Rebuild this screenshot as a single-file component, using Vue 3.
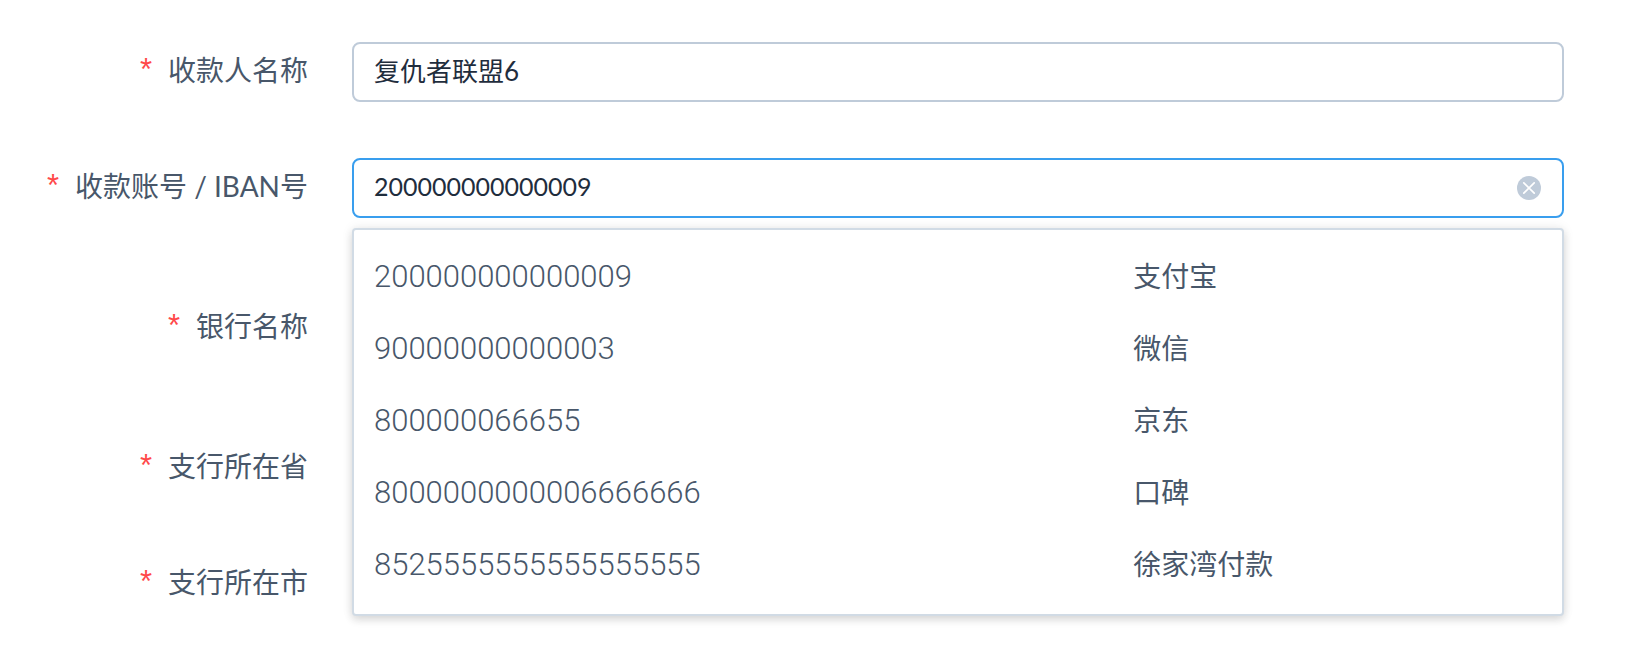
<script setup>
import { ref } from 'vue'

const payee = ref('复仇者联盟6')
const account = ref('200000000000009')
const bank = ref('')
const province = ref('')
const city = ref('')

const suggestions = [
  { account: '200000000000009', channel: '支付宝' },
  { account: '90000000000003', channel: '微信' },
  { account: '800000066655', channel: '京东' },
  { account: '8000000000006666666', channel: '口碑' },
  { account: '8525555555555555555', channel: '徐家湾付款' },
]
</script>

<template>
  <form class="form" @submit.prevent>
    <div class="row">
      <label class="label" for="payee"><span class="star">*</span>收款人名称</label>
      <div class="field">
        <input id="payee" v-model="payee" class="input" type="text" />
      </div>
    </div>

    <div class="row spaced">
      <label class="label" for="account"><span class="star">*</span>收款账号 / IBAN号</label>
      <div class="field">
        <input id="account" v-model="account" class="input active" type="text" autocomplete="off" />
        <button class="clear" type="button" aria-label="清空" @click="account = ''">
          <svg viewBox="0 0 24 24" width="24" height="24">
            <circle cx="12" cy="12" r="12" fill="#bfcbd9" />
            <path d="M6.8 6.8 17.2 17.2M17.2 6.8 6.8 17.2" fill="none" stroke="#fff" stroke-width="1.7" stroke-linecap="round" />
          </svg>
        </button>
        <ul class="menu" role="listbox">
          <li
            v-for="item in suggestions"
            :key="item.account"
            class="option"
            role="option"
            @click="account = item.account"
          >
            <span class="number">{{ item.account }}</span>
            <span>{{ item.channel }}</span>
          </li>
        </ul>
      </div>
    </div>

    <div class="row spaced">
      <label class="label" for="bank"><span class="star">*</span>银行名称</label>
      <div class="field"><input id="bank" v-model="bank" class="input" type="text" /></div>
    </div>

    <div class="row">
      <label class="label" for="province"><span class="star">*</span>支行所在省</label>
      <div class="field"><input id="province" v-model="province" class="input" type="text" /></div>
    </div>

    <div class="row">
      <label class="label" for="city"><span class="star">*</span>支行所在市</label>
      <div class="field"><input id="city" v-model="city" class="input" type="text" /></div>
    </div>
  </form>
</template>

<style>
body {
  background: #fff;
}
</style>

<style scoped>
.form {
  box-sizing: border-box;
  min-height: 100vh;
  padding: 42px 70px 40px 0;
  font-family: Lato, "Noto Sans CJK SC", sans-serif;
  font-weight: 400;
  color: #48576a;
}

.row {
  display: flex;
  align-items: center;
  gap: 44px;
  margin-bottom: 56px;
}

.row:last-child {
  margin-bottom: 0;
}

.spaced {
  margin-bottom: 80px;
}

.label {
  display: flex;
  flex: none;
  justify-content: flex-end;
  gap: 16px;
  width: 308px;
  padding-bottom: 4px;
  font-size: 28px;
  line-height: 40px;
  white-space: nowrap;
}

.star {
  color: #ff4949;
  font-family: "Liberation Sans", sans-serif;
  font-size: 31px;
}

.field {
  position: relative;
  flex: 1;
  min-width: 0;
}

.input {
  display: block;
  box-sizing: border-box;
  width: 100%;
  height: 60px;
  padding: 0 60px 6px 20px;
  border: 2px solid #bfcbd9;
  border-radius: 8px;
  outline: none;
  background: #fff;
  color: #1f2d3d;
  font: inherit;
  font-size: 26px;
}

.active {
  padding-bottom: 4px;
  border-color: #399eee;
  font-size: 25px;
}

.clear {
  position: absolute;
  top: 18px;
  right: 23px;
  width: 24px;
  height: 24px;
  padding: 0;
  border: 0;
  background: none;
  cursor: pointer;
}

.clear svg {
  display: block;
}

.menu {
  position: absolute;
  z-index: 10;
  top: 70px;
  right: 0;
  left: 0;
  margin: 0;
  padding: 12px 20px;
  border: 2px solid #d1dbe5;
  border-radius: 4px;
  background: #fff;
  box-shadow: 0 4px 8px rgba(0, 0, 0, 0.12), 0 0 12px rgba(0, 0, 0, 0.08);
  list-style: none;
}

.option {
  display: grid;
  grid-template-columns: 65fr 35fr;
  align-items: baseline;
  align-content: center;
  height: 72px;
  padding-bottom: 6px;
  box-sizing: border-box;
  font-size: 28px;
  cursor: pointer;
}

.number {
  font-family: Roboto, "Liberation Sans", sans-serif;
  font-size: 31px;
  font-weight: 300;
}
</style>
